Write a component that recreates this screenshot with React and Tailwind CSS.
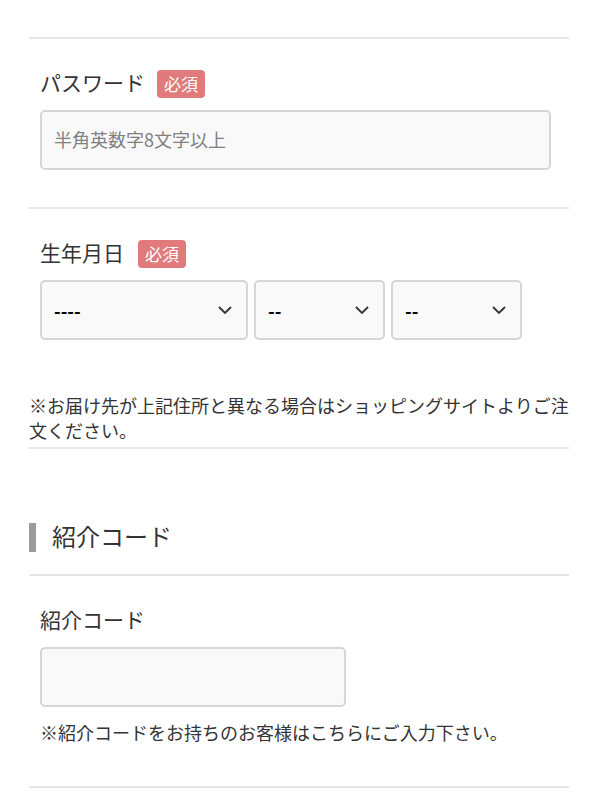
import { useState } from 'react';

function Badge() {
  return (
    <span className="inline-flex items-center justify-center h-[28px] w-[48px] rounded-[4px] bg-[#e17a7b] text-white text-[17px] leading-none pb-[2px]">
      必須
    </span>
  );
}

function Chevron() {
  return (
    <svg
      className="pointer-events-none absolute right-[16px] top-1/2 -translate-y-1/2"
      width="14"
      height="9"
      viewBox="0 0 14 9"
      fill="none"
    >
      <path d="M1 1.5 L7 7.5 L13 1.5" stroke="#333" strokeWidth="1.8" />
    </svg>
  );
}

function Select({ value, width, options, onChange }) {
  return (
    <div className={`relative ${width} h-[60px]`}>
      <select
        value={value}
        onChange={(e) => onChange(e.target.value)}
        className="appearance-none w-full h-full bg-[#f9f9f9] border-2 border-[#d6d6d6] rounded-[5px] pl-[12px] pr-[36px] text-[18px] font-bold text-black outline-none"
      >
        {options.map((o) => (
          <option key={o} value={o}>
            {o}
          </option>
        ))}
      </select>
      <Chevron />
    </div>
  );
}

export default function App() {
  const [password, setPassword] = useState('');
  const [year, setYear] = useState('----');
  const [month, setMonth] = useState('--');
  const [day, setDay] = useState('--');
  const [code, setCode] = useState('');

  const years = ['----', ...Array.from({ length: 80 }, (_, i) => String(2010 - i))];
  const months = ['--', ...Array.from({ length: 12 }, (_, i) => String(i + 1))];
  const days = ['--', ...Array.from({ length: 31 }, (_, i) => String(i + 1))];

  return (
    <div
      className="bg-white min-h-screen text-[#333]"
      style={{ fontFamily: '"Noto Sans CJK JP", "Noto Sans", sans-serif' }}
    >
      <div className="w-[540px] mx-auto pt-[37px]">
        {/* パスワード */}
        <div className="border-t-2 border-[#e6e6e6] pt-[31px] pb-[37px] pl-[11px] pr-[18px]">
          <div className="flex items-center gap-[12px] h-[28px]">
            <span className="text-[21px] leading-[24px] pb-[4px]">パスワード</span>
            <Badge />
          </div>
          <input
            type="password"
            value={password}
            onChange={(e) => setPassword(e.target.value)}
            placeholder="半角英数字8文字以上"
            className="mt-[12px] block w-full h-[60px] bg-[#f9f9f9] border-2 border-[#d6d6d6] rounded-[5px] px-[12px] pb-[2px] text-[18px] outline-none placeholder:text-[#808080]"
          />
        </div>

        {/* 生年月日 */}
        <div className="border-t-2 border-[#e6e6e6] pt-[31px]">
          <div className="pl-[11px] flex items-center gap-[14px] h-[28px]">
            <span className="text-[21px] leading-[24px] pb-[4px]">生年月日</span>
            <Badge />
          </div>
          <div className="pl-[11px] mt-[12px] flex gap-[6px]">
            <Select value={year} width="w-[208px]" options={years} onChange={setYear} />
            <Select value={month} width="w-[131px]" options={months} onChange={setMonth} />
            <Select value={day} width="w-[131px]" options={days} onChange={setDay} />
          </div>
          <p className="mt-[53px] text-[18px] leading-[25px] pb-[4px]">
            ※お届け先が上記住所と異なる場合はショッピングサイトよりご注文ください。
          </p>
        </div>

        {/* 紹介コード section */}
        <div className="border-t-2 border-[#e6e6e6] pt-[74px] pb-[22px]">
          <div className="flex items-center gap-[16px] h-[29px]">
            <span className="w-[7px] h-[29px] bg-[#9b9b9b]" />
            <span className="text-[24px] leading-[26px] pb-[3px]">紹介コード</span>
          </div>
        </div>

        <div className="border-t-2 border-[#e6e6e6] pt-[31px] pl-[11px] pb-[38px]">
          <div className="text-[21px] leading-[24px] pb-[4px]">紹介コード</div>
          <input
            type="text"
            value={code}
            onChange={(e) => setCode(e.target.value)}
            className="mt-[12px] block w-[306px] h-[60px] bg-[#f9f9f9] border-2 border-[#d6d6d6] rounded-[5px] px-[12px] text-[18px] outline-none"
          />
          <p className="mt-[13px] text-[18px] leading-[25px] pb-[3px]">
            ※紹介コードをお持ちのお客様はこちらにご入力下さい。
          </p>
        </div>
        <div className="border-t-2 border-[#e6e6e6] h-[40px]" />
      </div>
    </div>
  );
}
